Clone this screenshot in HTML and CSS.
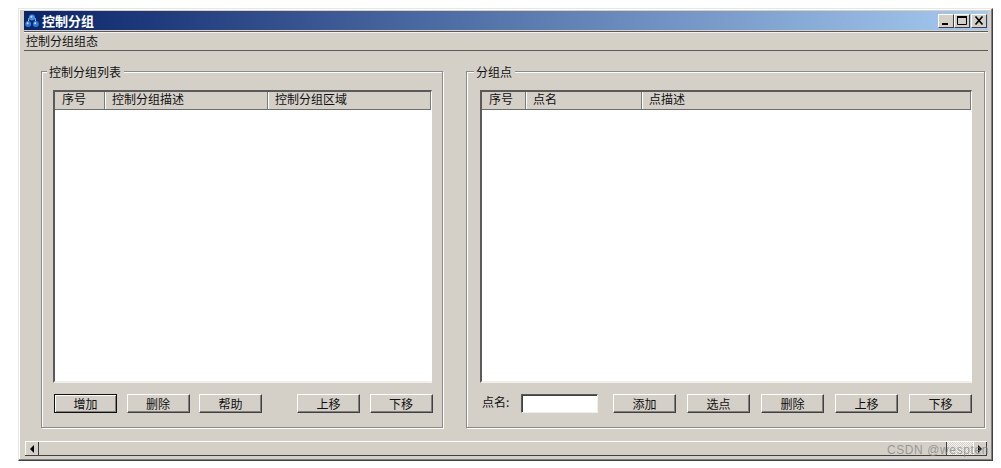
FILE: index.html
```html
<!DOCTYPE html>
<html>

<head>
    <meta charset="utf-8">
    <title>控制分组</title>
    <link rel="stylesheet" href="styles.css">
</head>

<body>
    <div class="window">
        <div class="titlebar">
            <svg class="app-icon" width="14" height="14" viewBox="0 0 14 14">
                <path d="M4 4 H10 M4 4 L3 10 M10 4 L11 10" stroke="#a9cdf2" stroke-width="1" fill="none" />
                <circle cx="7" cy="3.5" r="3" fill="#3f8fe8" />
                <circle cx="3.2" cy="10" r="3" fill="#2f7ad6" />
                <circle cx="10.8" cy="10" r="3" fill="#2f7ad6" />
                <circle cx="6.4" cy="2.8" r="1" fill="#bfe0ff" />
                <circle cx="2.6" cy="9.3" r="1" fill="#bfe0ff" />
                <circle cx="10.2" cy="9.3" r="1" fill="#bfe0ff" />
            </svg>
            <span class="title-text">控制分组</span>
            <div class="title-buttons">
                <button class="cap-btn">
                    <svg width="10" height="9" viewBox="0 0 10 9"><path d="M1 8 H7" stroke="#000" stroke-width="2" /></svg>
                </button>
                <button class="cap-btn">
                    <svg width="10" height="9" viewBox="0 0 10 9"><path d="M0.5 1 V8.5 H9.5 V1" stroke="#000" fill="none" stroke-width="1" /><path d="M0 1 H10" stroke="#000" stroke-width="2" /></svg>
                </button>
                <button class="cap-btn close">
                    <svg width="10" height="9" viewBox="0 0 10 9"><path d="M1.5 0.5 L8.5 8.5 M8.5 0.5 L1.5 8.5" stroke="#000" stroke-width="1.6" /></svg>
                </button>
            </div>
        </div>

        <div class="menubar">控制分组组态</div>

        <div class="client">
            <fieldset class="group group-left">
                <legend>控制分组列表</legend>
                <div class="list">
                    <div class="list-head">
                        <div class="col col-l1">序号</div>
                        <div class="col col-l2">控制分组描述</div>
                        <div class="col col-l3">控制分组区域</div>
                    </div>
                    <div class="list-body"></div>
                </div>
                <div class="actions">
                    <button class="btn default">增加</button>
                    <button class="btn">删除</button>
                    <button class="btn">帮助</button>
                    <button class="btn push">上移</button>
                    <button class="btn">下移</button>
                </div>
            </fieldset>

            <fieldset class="group group-right">
                <legend>分组点</legend>
                <div class="list">
                    <div class="list-head">
                        <div class="col col-r1">序号</div>
                        <div class="col col-r2">点名</div>
                        <div class="col col-r3">点描述</div>
                    </div>
                    <div class="list-body"></div>
                </div>
                <div class="actions actions-right">
                    <label class="field-label">点名:</label>
                    <input class="field" type="text">
                    <button class="btn add">添加</button>
                    <button class="btn">选点</button>
                    <button class="btn">删除</button>
                    <button class="btn">上移</button>
                    <button class="btn">下移</button>
                </div>
            </fieldset>
        </div>

        <div class="hscroll">
            <div class="arrow-btn"><span class="arrow-left"></span></div>
            <div class="thumb"></div>
            <div class="track"></div>
            <div class="arrow-btn"><span class="arrow-right"></span></div>
        </div>

        <div class="watermark">CSDN @wespten</div>
    </div>
</body>

</html>
```

FILE: styles.css
```css
body {
    margin: 0;
    background-color: white;
    font-family: "Noto Sans CJK SC", "Liberation Sans", sans-serif;
    font-size: 12px;
    color: #111;
}

.window {
    position: relative;
    box-sizing: border-box;
    width: 975px;
    height: 453px;
    margin: 8px 0 0 18px;
    padding: 2px 4px 4px 5px;
    background-color: #d4d0c8;
    border-top: 1px solid #e8e6e0;
    border-left: 1px solid #e8e6e0;
    border-right: 1px solid #404040;
    border-bottom: 1px solid #404040;
    box-shadow: inset -1px -1px 0 #808080, inset 1px 1px 0 #fff;
    display: flex;
    flex-direction: column;
}

.titlebar {
    height: 19px;
    flex: none;
    display: flex;
    align-items: center;
    padding-left: 1px;
    background: linear-gradient(to right, #0a246a, #a6caf0);
    color: white;
}

.app-icon {
    flex: none;
    margin-right: 3px;
}

.title-text {
    font-size: 13px;
    font-weight: bold;
    line-height: 19px;
}

.title-buttons {
    margin-left: auto;
    display: flex;
    margin-right: 1px;
}

.cap-btn {
    box-sizing: border-box;
    width: 16px;
    height: 14px;
    padding: 0;
    border: 1px solid;
    border-color: #fff #404040 #404040 #fff;
    background-color: #d4d0c8;
    display: flex;
    align-items: center;
    justify-content: center;
}

.cap-btn.close {
    margin-left: 1px;
}

.menubar {
    height: 20px;
    flex: none;
    box-sizing: border-box;
    padding-left: 2px;
    line-height: 17px;
    border-top: 1px solid #5a5a5a;
    border-bottom: 1px solid #5a5a5a;
    box-shadow: inset 0 1px 0 #f4f3ef;
    margin-top: 1px;
}

.client {
    flex: 1;
    min-height: 0;
    display: flex;
    gap: 23px;
    padding: 12px 3px 13px 17px;
}

.group {
    box-sizing: border-box;
    margin: 0;
    min-width: 0;
    border: 1px solid #8a8a86;
    box-shadow: 1px 1px 0 #fff, inset 1px 1px 0 #fff;
    display: flex;
    flex-direction: column;
}

.group legend {
    margin-left: -6px;
    padding: 0 3px 0 2px;
    line-height: 17px;
    background-color: #d4d0c8;
}

.group-left {
    width: 402px;
    padding: 10px 10px 14px 11px;
}

.group-right {
    width: 519px;
    padding: 10px 12px 14px 13px;
}

.list {
    flex: 1;
    min-height: 0;
    display: flex;
    flex-direction: column;
    border-top: 2px solid #5a5a5a;
    border-left: 2px solid #5a5a5a;
    border-right: 1px solid #fff;
    border-bottom: 2px solid #f0efea;
}

.list-head {
    height: 17px;
    flex: none;
    display: flex;
    border-bottom: 1px solid #6e6e6a;
    box-shadow: 0 1px 0 #fff;
}

.col {
    box-sizing: border-box;
    padding-left: 7px;
    line-height: 14px;
    border-right: 1px solid #7a7a76;
    box-shadow: 1px 0 0 #fff;
}

.col:last-child {
    flex: 1;
}

.col-l1 { width: 50px; }
.col-l2 { width: 163px; }
.col-l3 { width: 163px; }

.col-r1 { width: 44px; }
.col-r2 { width: 116px; }
.col-r3 { width: 330px; }

.list-body {
    flex: 1;
    background-color: white;
}

.actions {
    flex: none;
    display: flex;
    align-items: center;
    gap: 9.5px;
    height: 19px;
    margin-top: 11px;
    margin-right: -2px;
    padding-left: 1px;
}

.actions-right {
    gap: 11px;
    padding-left: 2px;
    margin-right: -1px;
}

.btn {
    box-sizing: border-box;
    width: 63px;
    height: 19px;
    padding: 0 0 3px 0;
    font-family: inherit;
    font-size: 12px;
    color: #111;
    background-color: #d4d0c8;
    border: 1px solid;
    border-color: #fff #404040 #404040 #fff;
    box-shadow: inset -1px -1px 0 #808080;
}

.btn.default {
    border-color: #111;
    box-shadow: inset 1px 1px 0 #fff, inset -1px -1px 0 #808080;
}

.push {
    margin-left: 25.5px;
}

.add {
    margin-left: 4px;
}

.field-label {
    width: 30px;
    line-height: 14px;
    padding-bottom: 3px;
}

.field {
    box-sizing: border-box;
    width: 77px;
    height: 19px;
    padding: 0;
    background-color: white;
    border: 1px solid;
    border-color: #5a5a5a #f0efea #f0efea #5a5a5a;
    box-shadow: inset 1px 1px 0 #404040;
}

.actions-right .field-label {
    margin-right: -2px;
}

.hscroll {
    box-sizing: border-box;
    height: 15px;
    flex: none;
    display: flex;
    border-top: 1px solid #fff;
    border-bottom: 1px solid #404040;
    margin-left: 1px;
    margin-right: 1px;
}

.arrow-btn {
    box-sizing: border-box;
    width: 14px;
    display: flex;
    align-items: center;
    justify-content: center;
    background-color: #d4d0c8;
    border-right: 1px solid #404040;
    border-left: 1px solid #fff;
}

.arrow-left {
    border-top: 4px solid transparent;
    border-bottom: 4px solid transparent;
    border-right: 4px solid black;
}

.arrow-right {
    border-top: 4px solid transparent;
    border-bottom: 4px solid transparent;
    border-left: 4px solid black;
}

.thumb {
    flex: 1;
    border-right: 1px solid #404040;
}

.track {
    width: 26px;
    background-color: #e6e4df;
    background-image: repeating-conic-gradient(#d4d0c8 0% 25%, #f4f3f0 0% 50%);
    background-size: 2px 2px;
}

.watermark {
    position: absolute;
    right: 3px;
    bottom: 3px;
    font-family: "Liberation Sans", sans-serif;
    font-size: 12px;
    line-height: 14px;
    letter-spacing: 0.6px;
    color: rgba(130, 130, 130, 0.75);
}
```
